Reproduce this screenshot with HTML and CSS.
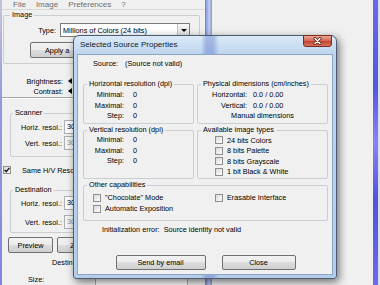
FILE: index.html
```html
<!DOCTYPE html>
<html lang="en">
<head>
  <meta charset="UTF-8">
  <title>Selected Source Properties</title>
  <link rel="stylesheet" href="styles.css">
</head>
<body>
<div class="desktop">
  <!-- scanner window behind the dialog -->
  <div class="app">
    <div class="app-edge-left"></div>
    <div class="app-client">
      <div class="menu"><span>File</span><span>Image</span><span>Preferences</span><span>?</span></div>

      <fieldset class="box box-image">
        <legend>Image</legend>
        <div class="type-row">
          <span class="lbl lbl-type">Type:</span>
          <div class="combo"><span>Millions of Colors (24 bits)</span><span class="combo-btn"><i class="tri-down"></i></span></div>
        </div>
        <button class="btn btn-apply">Apply a</button>
      </fieldset>

      <div class="adjust">
        <div class="adj-row"><span class="lbl lbl-adj">Brightness:</span><i class="tri-left"></i></div>
        <div class="adj-row"><span class="lbl lbl-adj">Contrast:</span><i class="tri-left"></i></div>
      </div>

      <fieldset class="box box-res box-scan">
        <legend>Scanner</legend>
        <div class="res-row"><span class="lbl lbl-res">Horiz. resol.:</span><span class="field">300</span></div>
        <div class="res-row"><span class="lbl lbl-res">Vert. resol.:</span><span class="field field-off">300</span></div>
      </fieldset>

      <div class="same-row">
        <span class="check check-on"><svg width="6" height="6" viewBox="0 0 6 6"><path d="M0.6 3.1 L2.3 4.8 L5.4 0.9" fill="none" stroke="#111" stroke-width="1.4"/></svg></span>
        <span class="same-text">Same H/V Resolution</span>
      </div>

      <fieldset class="box box-res box-dest">
        <legend>Destination</legend>
        <div class="res-row"><span class="lbl lbl-res">Horiz. resol.:</span><span class="field">300</span></div>
        <div class="res-row"><span class="lbl lbl-res">Vert. resol.:</span><span class="field field-off">300</span></div>
      </fieldset>

      <div class="side-buttons">
        <button class="btn btn-side">Preview</button>
        <button class="btn btn-side">Zoom</button>
      </div>
      <div class="destin-row">Destination</div>
      <div class="size-row"><span>Size:</span><span class="size-box"></span></div>
    </div>
    <div class="app-edge-right"></div>
  </div>
  <div class="backdrop"></div>
  <div class="strip"></div>
  <div class="tail"></div>

  <!-- modal dialog -->
  <div class="dialog">
    <div class="title-bar">
      Selected Source Properties
      <span class="close"><svg width="9" height="8" viewBox="0 0 9 8"><path d="M2 1.5 L7 6.5 M7 1.5 L2 6.5" stroke="#5a1a10" stroke-width="3" stroke-linecap="round"/><path d="M2 1.5 L7 6.5 M7 1.5 L2 6.5" stroke="#fff" stroke-width="1.5" stroke-linecap="round"/></svg></span>
    </div>
    <div class="client">
      <div class="source"><span class="source-lbl">Source:</span>(Source not valid)</div>

      <div class="groups">
        <fieldset class="box dlg-box">
          <legend>Horizontal resolution (dpi)</legend>
          <div class="rows">
            <div class="kv"><span class="k">Minimal:</span><span class="v">0</span></div>
            <div class="kv"><span class="k">Maximal:</span><span class="v">0</span></div>
            <div class="kv"><span class="k">Step:</span><span class="v">0</span></div>
          </div>
        </fieldset>
        <fieldset class="box dlg-box phys">
          <legend>Physical dimensions (cm/inches)</legend>
          <div class="rows">
            <div class="kv"><span class="k">Horizontal:</span><span class="v">0.0 / 0.00</span></div>
            <div class="kv"><span class="k">Vertical:</span><span class="v">0.0 / 0.00</span></div>
            <div class="kv kv-center">Manual dimensions</div>
          </div>
        </fieldset>
        <fieldset class="box dlg-box">
          <legend>Vertical resolution (dpi)</legend>
          <div class="rows rows-tight">
            <div class="kv"><span class="k">Minimal:</span><span class="v">0</span></div>
            <div class="kv"><span class="k">Maximal:</span><span class="v">0</span></div>
            <div class="kv"><span class="k">Step:</span><span class="v">0</span></div>
          </div>
        </fieldset>
        <fieldset class="box dlg-box">
          <legend>Available image types</legend>
          <div class="rows rows-tight">
            <div class="opt"><span class="check"></span>24 bits Colors</div>
            <div class="opt"><span class="check"></span>8 bits Palette</div>
            <div class="opt"><span class="check"></span>8 bits Grayscale</div>
            <div class="opt"><span class="check"></span>1 bit Black &amp; White</div>
          </div>
        </fieldset>
      </div>

      <fieldset class="box dlg-box other">
        <legend>Other capabilities</legend>
        <div class="other-grid">
          <div class="opt opt-left"><span class="check"></span>"Chocolate" Mode</div>
          <div class="opt"><span class="check"></span>Erasable Interface</div>
          <div class="opt opt-left"><span class="check"></span>Automatic Exposition</div>
        </div>
      </fieldset>

      <div class="err">Initialization error:&nbsp; Source identity not valid</div>

      <div class="actions">
        <button class="btn btn-send">Send by email</button>
        <button class="btn btn-close">Close</button>
      </div>
    </div>
  </div>
</div>
</body>
</html>
```

FILE: styles.css
```css
/* page */
body {
  margin: 0;
  font-family: "Liberation Sans", Arial, sans-serif;
  font-size: 7.3px;
  color: #000;
  background: #f0f0f0;
  overflow: hidden;
}

.desktop {
  position: relative;
  display: flex;
  width: 380px;
  height: 285px;
}

/* window in the background */
.app {
  display: flex;
  flex: none;
  width: 212px;
}

.app-edge-left {
  width: 2px;
  background: linear-gradient(#c4c6d6, #949ade 35%, #7f88d8);
}

.app-client {
  width: 203px;
  background: #f0f0f0;
}

.app-edge-right {
  width: 7px;
  background: linear-gradient(90deg, #6f80cf, #a9b9e9 40%, #c2cef0 60%, #8898d6);
}

.backdrop {
  flex: 1;
  background: #f0f0f0;
}

.strip {
  width: 5px;
  background: linear-gradient(#6a6ae6, #5555df 30%, #8585f0 50%, #5252dc 70%, #6c6ce8);
}

.tail {
  width: 2px;
  background: #dcdcf0;
}

.menu {
  display: flex;
  gap: 10px;
  height: 9px;
  line-height: 9px;
  padding-left: 11px;
  font-size: 8px;
  color: #6d6d6d;
  border-bottom: 1px solid #d9d9d9;
}

/* group boxes */
.box {
  margin: 0;
  padding: 0;
  min-width: 0;
  border: 1px solid #c9ced3;
  border-radius: 2px;
}

.box legend {
  padding: 0 2px;
  margin-left: 3px;
  line-height: 10px;
}

.lbl {
  text-align: right;
  flex: none;
}

.box-image {
  margin: 0 5px 0 1px;
  padding: 3px 0 5px;
}

.box-image legend {
  margin-left: 6px;
}

.type-row {
  display: flex;
  align-items: center;
  height: 14px;
}

.lbl-type {
  width: 52px;
  margin-right: 4px;
}

.combo {
  display: flex;
  align-items: center;
  width: 130px;
  height: 14px;
  box-sizing: border-box;
  padding-left: 2px;
  border: 1px solid #7a7a7a;
  background: #fff;
}

.combo-btn {
  display: flex;
  align-items: center;
  justify-content: center;
  margin-left: auto;
  width: 11px;
  height: 12px;
  border-left: 1px solid #c0c0c0;
  background: linear-gradient(#f6f6f6, #e2e2e2);
}

.tri-down {
  border-top: 3px solid #000;
  border-left: 3px solid transparent;
  border-right: 3px solid transparent;
}

.tri-left {
  margin-left: 5px;
  border-right: 4px solid #000;
  border-top: 3px solid transparent;
  border-bottom: 3px solid transparent;
}

.btn {
  font: inherit;
  color: #000;
  padding: 0;
  box-sizing: border-box;
  border: 1px solid #707070;
  border-radius: 2px;
  background: linear-gradient(#f2f2f2, #ebebeb 50%, #dddddd 50%, #cfcfcf);
}

.btn-apply {
  display: block;
  margin: 5px 0 0 26px;
  width: 78px;
  height: 16px;
  padding-left: 14px;
  text-align: left;
}

.adjust {
  padding: 12px 0 1px;
  border-bottom: 1px solid #a8a8a8;
  box-shadow: 0 1px #fff;
}

.adj-row {
  display: flex;
  align-items: center;
  height: 10px;
}

.lbl-adj {
  width: 61px;
}

.box-res {
  margin: 10px 5px 0 8px;
}

.box-res legend {
  margin-left: 2px;
}

.box-scan {
  padding: 2px 0 6px;
}

.box-dest {
  padding: 1px 0 3px;
}

.res-row {
  display: flex;
  align-items: center;
  height: 14px;
}

.box-scan .res-row + .res-row {
  margin-top: 2px;
}

.box-dest .res-row + .res-row {
  margin-top: 5px;
}

.lbl-res {
  width: 51px;
  margin-right: 2px;
}

.field {
  width: 40px;
  height: 14px;
  box-sizing: border-box;
  padding-left: 2px;
  line-height: 12px;
  border: 1px solid #abadb3;
  background: #fff;
}

.field-off {
  background: #f4f4f4;
  color: #8d8d8d;
}

.check {
  flex: none;
  width: 8px;
  height: 8px;
  box-sizing: border-box;
  border: 1px solid #8e8f8f;
  background: linear-gradient(135deg, #dadada, #fdfdfd);
}

.check-on {
  display: flex;
  align-items: center;
  justify-content: center;
}

.same-row {
  display: flex;
  align-items: center;
  height: 10px;
  margin-top: 8px;
  padding-left: 1px;
}

.same-text {
  margin-left: 11px;
  white-space: nowrap;
}

.side-buttons {
  display: flex;
  gap: 4px;
  margin-top: 4px;
  padding-left: 6px;
}

.btn-side {
  width: 45px;
  height: 16px;
}

.destin-row {
  margin-top: 5px;
  height: 10px;
  line-height: 10px;
  padding-left: 50px;
}

.size-row {
  display: flex;
  margin-top: 7px;
  height: 10px;
  line-height: 10px;
  padding-left: 26px;
}

.size-box {
  margin-left: 51px;
  width: 91px;
  height: 14px;
  border: 1px solid #abadb3;
  background: #fff;
}

/* dialog */
.dialog {
  position: absolute;
  left: 73px;
  top: 35px;
  width: 264px;
  height: 244px;
  box-sizing: border-box;
  display: flex;
  flex-direction: column;
  border: 1px solid #4b5d74;
  border-radius: 6px 6px 3px 3px;
  background:
    linear-gradient(90deg, transparent 127px, rgba(70, 100, 190, 0.35) 132px, rgba(70, 100, 190, 0.35) 139px, transparent 145px),
    linear-gradient(#dbe9f8, #bdd5ee 18px, #b4cdea);
  box-shadow: 2px 3px 8px rgba(0, 0, 0, 0.55);
}

.title-bar {
  position: relative;
  height: 18px;
  line-height: 18px;
  padding-left: 6px;
  font-size: 8px;
  color: #0c1a2c;
}

.close {
  position: absolute;
  right: 4px;
  top: -1px;
  width: 29px;
  height: 12px;
  box-sizing: border-box;
  display: flex;
  align-items: center;
  justify-content: center;
  border: 1px solid #7d2a1f;
  border-radius: 0 0 3px 3px;
  background: linear-gradient(#eaa797, #d46a57 45%, #c34632 55%, #d5735f);
}

.client {
  flex: 1;
  margin: 0 3px 3px;
  padding: 4px 4px 0 5px;
  border: 1px solid #8ea6c4;
  background: #f0f0f0;
}

.source {
  height: 10px;
  line-height: 10px;
  padding-left: 10px;
}

.source-lbl {
  display: inline-block;
  width: 32px;
}

.groups {
  display: grid;
  grid-template-columns: 111px 131px;
  grid-template-rows: 45px 54px;
  column-gap: 3px;
  row-gap: 1px;
  margin-top: 10px;
}

.rows {
  padding-top: 1px;
}

.rows-tight {
  padding-top: 0;
}

.kv {
  display: flex;
  height: 10.5px;
  line-height: 10.5px;
}

.kv .k {
  width: 40px;
  text-align: right;
}

.kv .v {
  margin-left: 9px;
}

.phys .kv .k {
  width: 49px;
}

.phys .kv .v {
  margin-left: 6px;
}

.kv-center {
  justify-content: center;
}

.opt {
  display: flex;
  align-items: center;
  height: 10.5px;
  padding-left: 17px;
  white-space: nowrap;
}

.opt .check {
  margin-right: 4px;
}

.other {
  margin-top: 1px;
  height: 39px;
}

.other-grid {
  display: grid;
  grid-template-columns: 114px 1fr;
  grid-auto-rows: 11px;
  padding-top: 2px;
}

.other-grid .opt {
  height: 11px;
}

.other-grid .opt-left {
  padding-left: 9px;
}

.err {
  margin-top: 4px;
  height: 10px;
  line-height: 10px;
  padding-left: 19px;
}

.actions {
  display: flex;
  justify-content: center;
  gap: 16px;
  margin-top: 20px;
}

.btn-send {
  width: 90px;
  height: 15px;
}

.btn-close {
  width: 74px;
  height: 15px;
}
```
